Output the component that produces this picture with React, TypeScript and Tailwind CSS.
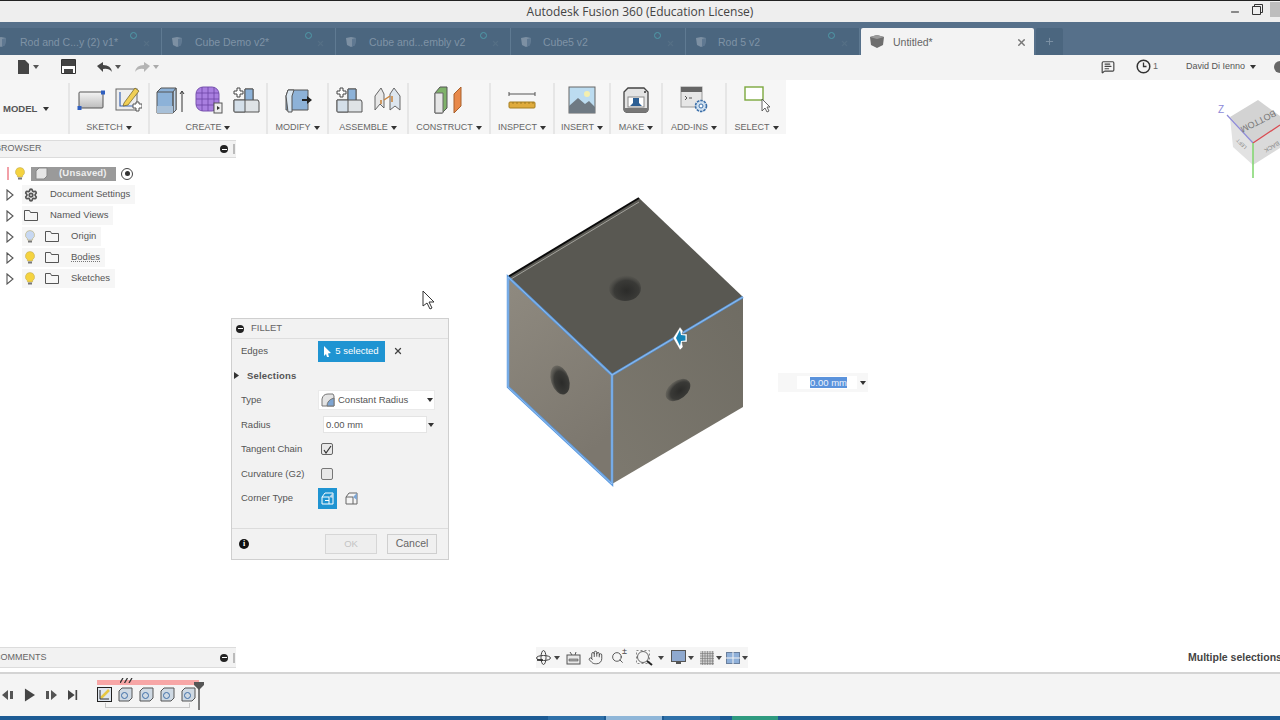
import React from 'react';
import { Hand, MessageSquareText, Search, Settings, X, Plus, Minus } from 'lucide-react';

const Caret = ({ className = '' }: { className?: string }) => (
  <svg width="6" height="4" viewBox="0 0 6 4" className={`shrink-0 ${className}`}>
    <path d="M0 0h6L3 4z" fill="currentColor" />
  </svg>
);

// document tabs along the top
const tabs = [
  { name: 'Rod and C...y (2) v1*', width: 'w-[162px]', text: 'pl-[20px]', dot: 'left-[130px]', clip: true },
  { name: 'Cube Demo v2*', width: 'w-[174px]', text: 'pl-[33px]', dot: 'left-[143px]', clip: false },
  { name: 'Cube and...embly v2', width: 'w-[175px]', text: 'pl-[33px]', dot: 'left-[144px]', clip: false },
  { name: 'Cube5 v2', width: 'w-[175px]', text: 'pl-[32px]', dot: 'left-[143px]', clip: false },
  { name: 'Rod 5 v2', width: 'w-[174px]', text: 'pl-[32px]', dot: 'left-[142px]', clip: false },
];

const TabCube = () => (
  <svg width="12" height="12" viewBox="0 0 12 12">
    <path d="M1 2l5-1 5 1-1 7-4 2-4-2z" fill="#7d90a3" />
    <path d="M7 3l4-1-1 7-3 2z" fill="#5f7891" />
  </svg>
);

const SketchRect = () => (
  <svg width="28" height="28" viewBox="0 0 28 28">
    <defs>
      <linearGradient id="sk" x1="0" y1="0" x2="0" y2="1">
        <stop offset="0" stopColor="#f4f4f4" />
        <stop offset="1" stopColor="#bcbcbc" />
      </linearGradient>
    </defs>
    <rect x="2" y="6" width="24" height="16" rx="1" fill="url(#sk)" stroke="#555" />
    <rect x="0.5" y="20" width="4" height="4" fill="#2f5fc0" />
    <rect x="24" y="4.5" width="4" height="4" fill="#2f5fc0" />
  </svg>
);

const SketchEdit = () => (
  <svg width="28" height="28" viewBox="0 0 28 28">
    <rect x="2" y="3" width="21" height="21" fill="#eee" stroke="#666" />
    <path d="M6 6v14h14" stroke="#3a66b5" strokeWidth="1.2" fill="none" />
    <path d="M10 17L21 2l4 3-11 14-5 1z" fill="#f0cf56" stroke="#6a5a20" strokeWidth="0.7" />
    <path d="M19 18h3v-2h3v2h3v4h-3v3h-3v-3h-3z" fill="#fff" stroke="#555" />
  </svg>
);

const Extrude = () => (
  <svg width="30" height="28" viewBox="0 0 30 28">
    <path d="M1 6l4-4h15v22l-3 3H1z" fill="#8db2d8" stroke="#555" />
    <path d="M17 6l3-4v22l-3 3z" fill="#bcd3ea" stroke="#555" />
    <path d="M1 6h16v21" fill="none" stroke="#555" />
    <path d="M1 20h16v7H1z" fill="#a8c0d8" />
    <path d="M26 26V6M24 8l2-3 2 3" stroke="#333" fill="none" />
  </svg>
);

const FormMesh = () => (
  <svg width="28" height="28" viewBox="0 0 28 28">
    <rect x="1" y="1" width="23" height="24" rx="7" fill="#a97fe0" stroke="#7a55b0" />
    <path d="M1 7h23M1 13h23M1 19h23M7 1v24M13 1v24M19 1v24" stroke="#6d45a5" strokeWidth="0.8" />
    <rect x="19" y="17" width="8" height="10" fill="#eee" stroke="#555" />
    <path d="M22 20l3 2-3 2z" fill="#333" />
  </svg>
);

const AssembleNew = () => (
  <svg width="28" height="28" viewBox="0 0 28 28">
    <path d="M2 14h11V3h8v11h5l1 2v10H3l-1-1z" fill="#dfe3e6" stroke="#555" />
    <path d="M13 3h8v11h-8z" fill="#8db2d8" stroke="#555" />
    <path d="M2 14h11v12H2z" fill="#d4dfe9" stroke="#555" />
    <path d="M5 2h3v3h3v3H8v3H5V8H2V5h3z" fill="#fff" stroke="#444" />
  </svg>
);

const Modify = () => (
  <svg width="28" height="28" viewBox="0 0 28 28">
    <path d="M4 4h20v20H2V10z" fill="#8db2d8" stroke="#555" />
    <path d="M2 10L4 4h6L8 10v16H4z" fill="#dbe7f1" stroke="#555" />
    <path d="M18 13h5v-3l5 4-5 4v-3h-5z" fill="#222" />
  </svg>
);

const Joint = () => (
  <svg width="28" height="28" viewBox="0 0 28 28">
    <path d="M2 24V10l6-8 3 6v14l-4-4z" fill="#e7e7e7" stroke="#666" />
    <path d="M17 8l4-6 6 8v14l-5-4-5 4z" fill="#dde6ee" stroke="#666" />
    <path d="M11 14l6-4M8 14v4M19 10v6" stroke="#c9823a" strokeWidth="1.5" />
  </svg>
);

const Construct = () => (
  <svg width="30" height="28" viewBox="0 0 30 28">
    <path d="M1 7l5-6h7v21l-5 5H1z" fill="#7fb26a" stroke="#555" />
    <path d="M1 7h8v20H1z" fill="#e6e6e6" stroke="#666" />
    <path d="M20 8l7-7v19l-7 7z" fill="#e8894a" stroke="#a8602c" />
  </svg>
);

const Inspect = () => (
  <svg width="28" height="28" viewBox="0 0 28 28">
    <path d="M1 8h26M1 6v4M27 6v4" stroke="#555" fill="none" />
    <rect x="1" y="16" width="26" height="6" rx="1" fill="#dfab3c" stroke="#a57f20" />
    <path d="M5 16v2M9 16v2M13 16v2M17 16v2M21 16v2M25 16v2" stroke="#8a6a18" strokeWidth="0.7" />
  </svg>
);

const Insert = () => (
  <svg width="28" height="28" viewBox="0 0 28 28">
    <rect x="1" y="1" width="26" height="26" fill="#bcdcf0" stroke="#666" />
    <circle cx="19" cy="8" r="3" fill="#f4efae" />
    <path d="M1 27v-7l9-8 7 6 4-3 6 6v6z" fill="#6f7a83" />
  </svg>
);

const Make = () => (
  <svg width="28" height="28" viewBox="0 0 28 28">
    <path d="M2 6l4-4h16l4 4v18l-2 2H4l-2-2z" fill="#e4e4e4" stroke="#444" strokeWidth="1.3" />
    <rect x="6" y="11" width="16" height="10" fill="#fff" stroke="#888" />
    <path d="M11 17v-5h6v5l3 3H8z" fill="#2d5f94" />
    <path d="M2 22h24v4H2z" fill="#777" />
    <circle cx="23" cy="6" r="1" fill="#333" />
  </svg>
);

const AddIns = () => (
  <svg width="28" height="28" viewBox="0 0 28 28">
    <rect x="1" y="1" width="21" height="20" fill="#e6e6e6" stroke="#999" />
    <rect x="1" y="1" width="21" height="5" fill="#666" />
    <path d="M5 10l2 2-2 2M9 12h3" stroke="#555" fill="none" />
    <circle cx="21" cy="20" r="5.5" fill="#cfe0f0" stroke="#3a6ea8" strokeWidth="1.6" strokeDasharray="2.5 1" />
    <circle cx="21" cy="20" r="2" fill="#fff" stroke="#3a6ea8" />
  </svg>
);

const SelectIcon = () => (
  <svg width="28" height="28" viewBox="0 0 28 28">
    <rect x="2" y="1" width="18" height="13" fill="#fff" stroke="#7ca83e" strokeWidth="1.4" />
    <path d="M19 13v12l3-3 2 4 2-1-2-4h3z" fill="#fff" stroke="#555" strokeWidth="0.9" />
  </svg>
);

// ribbon groups, widths follow the divider positions
const ribbon = [
  { label: 'SKETCH', width: 'w-[80px]', gap: 'gap-[9px]', icons: [<SketchRect key="a" />, <SketchEdit key="b" />] },
  { label: 'CREATE', width: 'w-[118px]', gap: 'gap-[9px]', icons: [<Extrude key="a" />, <FormMesh key="b" />, <AssembleNew key="c" />] },
  { label: 'MODIFY', width: 'w-[61px]', gap: 'gap-0', icons: [<Modify key="a" />] },
  { label: 'ASSEMBLE', width: 'w-[80px]', gap: 'gap-[10px]', icons: [<AssembleNew key="a" />, <Joint key="b" />] },
  { label: 'CONSTRUCT', width: 'w-[82px]', gap: 'gap-0', icons: [<Construct key="a" />] },
  { label: 'INSPECT', width: 'w-[64px]', gap: 'gap-0', icons: [<Inspect key="a" />] },
  { label: 'INSERT', width: 'w-[56px]', gap: 'gap-0', icons: [<Insert key="a" />] },
  { label: 'MAKE', width: 'w-[52px]', gap: 'gap-0', icons: [<Make key="a" />] },
  { label: 'ADD-INS', width: 'w-[64px]', gap: 'gap-0', icons: [<AddIns key="a" />] },
  { label: 'SELECT', width: 'w-[61px]', gap: 'gap-0', icons: [<SelectIcon key="a" />] },
];

const Bulb = ({ color = '#f5d33f' }: { color?: string }) => (
  <svg width="10" height="13" viewBox="0 0 10 13">
    <path d="M5 .5a4.5 4.5 0 0 0-2.6 8.2V10h5.2V8.700A4.500 4.500 0 0 0 5 .5z" fill={color} stroke="#b9a65a" strokeWidth="0.5" />
    <rect x="3" y="10.500" width="4" height="2" fill="#777" />
  </svg>
);

const Folder = () => (
  <svg width="14" height="11" viewBox="0 0 14 11">
    <path d="M.5 10.500V.5h5l1 2h7v8z" fill="#f6f6f6" stroke="#555" />
  </svg>
);

const Expand = () => (
  <svg width="8" height="12" viewBox="0 0 8 12" className="shrink-0">
    <path d="M1 1l6 5-6 5z" fill="#fff" stroke="#555" strokeWidth="1.100" />
  </svg>
);

const PanelPin = () => (
  <div className="flex items-center gap-[5px]">
    <span className="w-[8px] h-[8px] rounded-full bg-[#222] flex items-center justify-center">
      <span className="w-[5px] h-px bg-white" />
    </span>
    <span className="w-[2px] h-[10px] border-x border-[#bbb]" />
  </div>
);

const Row = ({ label, children }: { label: string; children?: React.ReactNode }) => (
  <div className="flex items-center h-[24.500px] pl-[9px]">
    <span className="w-[77px] text-[9.500px] text-[#555]">{label}</span>
    {children}
  </div>
);

const TreeRow = ({ children, label, pad }: { children: React.ReactNode; label: string; pad: string }) => (
  <div className="flex items-center h-[21px] pl-[6px]">
    <Expand />
    <div className="flex items-center h-[19px] ml-[8px] pr-[5px] bg-[#f6f6f6]">
      {children}
      <span className={`text-[9.500px] text-[#555] ${pad}`}>{label}</span>
    </div>
  </div>
);

const Model3D = () => (
  <svg width="260" height="300" viewBox="495 190 260 300" className="absolute left-[495px] top-[110px]">
    <defs>
      <linearGradient id="lf" x1="0" y1="0" x2="0.4" y2="1">
        <stop offset="0" stopColor="#8f8a80" />
        <stop offset="1" stopColor="#7c776e" />
      </linearGradient>
      <linearGradient id="rf" x1="0" y1="1" x2="1" y2="0">
        <stop offset="0" stopColor="#7d796f" />
        <stop offset="1" stopColor="#6f6c63" />
      </linearGradient>
      <radialGradient id="hole" cx="0.55" cy="0.6" r="0.6">
        <stop offset="0" stopColor="#2b2b29" />
        <stop offset="0.65" stopColor="#3a3a37" />
        <stop offset="1" stopColor="#5a5953" stopOpacity="0.6" />
      </radialGradient>
    </defs>
    <path d="M639 198L508 277l104 98 131-78z" fill="#595852" />
    <path d="M508 277l104 98v109L508 387z" fill="url(#lf)" />
    <path d="M612 375l131-78v110l-131 77z" fill="url(#rf)" />
    <ellipse cx="625" cy="288" rx="16" ry="13" fill="url(#hole)" />
    <ellipse cx="560" cy="380" rx="9" ry="15" transform="rotate(-18 560 380)" fill="url(#hole)" />
    <ellipse cx="678" cy="390" rx="14" ry="9" transform="rotate(-38 678 390)" fill="url(#hole)" />
    <path d="M508 277L639 198" stroke="#0b0b0b" strokeWidth="2" />
    <path d="M511 279L639 202" stroke="#a3a29c" strokeWidth="1" />
    <path d="M743 297L612 375 508 277v110l104 97V375" fill="none" stroke="#5b9be2" strokeWidth="2.500" />
    <path d="M743 297L612 375 508 277v110l104 97V375" fill="none" stroke="#c8dcf2" strokeWidth="0.5" />
    <path d="M673 338l7-11 3 4-1 3h5v8h-5l1 5-3 3z" fill="#fff" stroke="#555" strokeWidth="0.4" />
    <path d="M676 338l4-8 1 5 4.500.5v5l-4.500.5-1 5z" fill="#1584b8" />
  </svg>
);

const ViewCube = () => (
  <svg width="64" height="84" viewBox="1216 98 64 84" className="absolute left-[1216px] top-[18px]">
    <path d="M1230 117l28-17 22 16v9l-27 18z" fill="#d3d3d3" />
    <path d="M1230 117l23 26v22l-20-18z" fill="#e2e2e2" />
    <path d="M1253 143l27-18v23l-27 17z" fill="#dadada" />
    <path d="M1227 115l26 28" stroke="#8e8bd8" strokeWidth="1.200" />
    <path d="M1253 143l27-18" stroke="#d94a50" strokeWidth="1.200" />
    <path d="M1253 143v35" stroke="#7ed66b" strokeWidth="1.500" />
    <text x="1218" y="113" fontSize="10" fill="#8e8bd8" fontFamily="Liberation Sans">Z</text>
    <text x="1274" y="110" fontSize="9" fill="#777" fontFamily="Liberation Sans" transform="rotate(153 1274 110)">BOTTOM</text>
    <text x="1278" y="141" fontSize="6" fill="#888" fontFamily="Liberation Sans" transform="rotate(150 1278 141)">BACK</text>
    <text x="1247" y="147" fontSize="5" fill="#888" fontFamily="Liberation Sans" transform="rotate(225 1247 147)">LEFT</text>
  </svg>
);

const FilletDialog = () => (
  <div className="absolute left-[231px] top-[238px] w-[218px] h-[242px] bg-[#f2f2f2] border border-[#cfcfcf] flex flex-col">
    <div className="flex items-center gap-[7px] h-[20px] shrink-0 pl-[4px] border-b border-[#dedede]">
      <span className="w-[8px] h-[8px] rounded-full bg-[#222] flex items-center justify-center">
        <span className="w-[5px] h-px bg-white" />
      </span>
      <span className="text-[9.500px] text-[#666]">FILLET</span>
    </div>
    <Row label="Edges">
      <div className="flex items-center justify-center gap-[4px] w-[67px] h-[21px] bg-[#1f94d2] text-white text-[9.500px]">
        <svg width="7" height="11" viewBox="0 0 7 11"><path d="M0 0l7 7-3 .4L5 11l-2 0-1-3-2 2z" fill="#fff" /></svg>
        5 selected
      </div>
      <X size={10} strokeWidth={3} className="ml-[8px] text-[#444]" />
    </Row>
    <div className="flex items-center h-[24.500px] pl-[2px] gap-[8px]">
      <svg width="5" height="7" viewBox="0 0 5 7"><path d="M0 0l5 3.500L0 7z" fill="#333" /></svg>
      <span className="text-[9.500px] font-bold text-[#555] tracking-[0.2px]">Selections</span>
    </div>
    <Row label="Type">
      <div className="flex items-center w-[117px] h-[20px] bg-white border border-[#eaeaea] pl-[2px] pr-[1px]">
        <svg width="14" height="14" viewBox="0 0 14 14" className="shrink-0">
          <path d="M1 13V6q1-5 6-5h5l1 2v10z" fill="#e4e4e4" stroke="#777" />
          <path d="M6 13q0-6 7-8v8z" fill="#7ea5d2" stroke="#777" />
        </svg>
        <span className="ml-[3px] text-[9.500px] text-[#555]">Constant Radius</span>
        <Caret className="ml-auto text-[#333]" />
      </div>
    </Row>
    <Row label="Radius">
      <div className="flex items-center w-[104px] h-[17px] ml-[5px] bg-white border border-[#e4e4e4] pl-[2px] text-[9.500px] text-[#555]">0.00 mm</div>
      <Caret className="ml-[1px] text-[#333]" />
    </Row>
    <Row label="Tangent Chain">
      <div className="flex items-center justify-center w-[12px] h-[12px] ml-[3px] rounded-[2px] bg-[#e8e8e8] border border-[#666]">
        <svg width="9" height="9" viewBox="0 0 9 9"><path d="M1 5l2 3 5-7" stroke="#333" strokeWidth="1.200" fill="none" /></svg>
      </div>
    </Row>
    <Row label="Curvature (G2)">
      <div className="w-[12px] h-[12px] ml-[3px] rounded-[2px] bg-[#e8e8e8] border border-[#777]" />
    </Row>
    <Row label="Corner Type">
      <div className="flex items-center justify-center w-[19px] h-[21px] bg-[#1f94d2]">
        <svg width="13" height="13" viewBox="0 0 13 13">
          <path d="M1 12V5l3-4h8v11zM1 5h7v7M4 8.500h4" fill="none" stroke="#fff" />
          <path d="M8 5l4-4v5z" fill="#bcd9ec" />
        </svg>
      </div>
      <div className="flex items-center justify-center w-[19px] h-[21px] ml-[5px]">
        <svg width="13" height="13" viewBox="0 0 13 13">
          <path d="M1 12V5l3-4h8v11zM1 5h7v7" fill="#f4f4f4" stroke="#666" />
          <path d="M8 5l4-4v7z" fill="#7ea5d2" />
        </svg>
      </div>
    </Row>
    <div className="mt-auto flex items-center h-[31px] border-t border-[#dcdcdc] pl-[7px]">
      <span className="flex items-center justify-center w-[10px] h-[10px] rounded-full bg-[#111] text-white text-[8px] font-bold font-['Liberation_Serif',serif]">i</span>
      <div className="ml-[76px] flex items-center justify-center w-[52px] h-[20px] bg-[#eeeeee] border border-[#d6d6d6] text-[9.500px] text-[#c4c4c4]">OK</div>
      <div className="ml-[10px] flex items-center justify-center w-[50px] h-[20px] bg-[#f0f0f0] border border-[#cfcfcf] text-[10.500px] text-[#666]">Cancel</div>
    </div>
  </div>
);

const NavBar = () => (
  <div className="flex items-center w-[212px] h-[21px] bg-[#f5f5f5] text-[#444]">
    <svg width="15" height="15" viewBox="0 0 15 15">
      <ellipse cx="7.500" cy="8" rx="7" ry="2.500" fill="none" stroke="#444" />
      <ellipse cx="7.500" cy="7.500" rx="2.500" ry="7" fill="none" stroke="#444" />
      <path d="M1 10h6" stroke="#222" strokeWidth="1.500" />
    </svg>
    <Caret className="ml-[3px]" />
    <svg width="15" height="14" viewBox="0 0 15 14" className="ml-[6px]">
      <rect x="1" y="4" width="13" height="9" fill="#e8e8e8" stroke="#555" />
      <path d="M3 8h9v2H3z" fill="#aaa" stroke="#555" strokeWidth="0.6" />
      <path d="M4 1l2 3M10 1l-1 3" stroke="#555" />
    </svg>
    <Hand size={15} strokeWidth={1.400} className="ml-[7px]" />
    <span className="relative ml-[8px] w-[15px] h-[15px]">
      <Search size={13} strokeWidth={1.600} className="mt-[1px]" />
      <span className="absolute right-[-1px] top-[-3px] text-[9px] leading-none">±</span>
    </span>
    <svg width="17" height="16" viewBox="0 0 17 16" className="ml-[10px]">
      <circle cx="7" cy="7" r="5.500" fill="#f4f4f4" stroke="#666" />
      <rect x="0.500" y="0.500" width="13" height="13" fill="none" stroke="#888" strokeDasharray="2 2" />
      <path d="M11 11l5 4" stroke="#222" strokeWidth="2" />
    </svg>
    <Caret className="ml-[5px]" />
    <svg width="15" height="15" viewBox="0 0 15 15" className="ml-[7px]">
      <rect x="0.500" y="0.500" width="14" height="11" fill="#8fa9cf" stroke="#555" />
      <path d="M5 12h5v2H5z" fill="#555" />
    </svg>
    <Caret className="ml-[2px]" />
    <svg width="14" height="14" viewBox="0 0 14 14" className="ml-[6px]">
      <rect width="14" height="14" fill="#cfcfcf" />
      <path d="M2.500 0v14M5 0v14M7.500 0v14M10 0v14M12.500 0v14M0 2.500h14M0 5h14M0 7.500h14M0 10h14M0 12.500h14" stroke="#777" strokeWidth="0.6" />
    </svg>
    <Caret className="ml-[2px]" />
    <svg width="14" height="12" viewBox="0 0 14 12" className="ml-[4px]">
      <rect x="0.500" y="0.500" width="13" height="11" fill="#8fb0d9" stroke="#6a7f9c" />
      <path d="M7 0v12M0 6h14" stroke="#f4f4f4" />
    </svg>
    <Caret className="ml-[2px]" />
  </div>
);

const App = () => {
  return (
    <div className="w-[1280px] h-[720px] overflow-hidden flex flex-col bg-white font-['Liberation_Sans',Arial,sans-serif]">
      {/* title bar */}
      <div className="relative flex items-center justify-center h-[22px] shrink-0 bg-[#eeeeee] border-t border-[#222]">
        <span className="text-[12px] text-[#444] font-['Open_Sans',sans-serif]">Autodesk Fusion 360 (Education License)</span>
        <div className="absolute right-0 top-0 flex items-start">
          <Minus size={12} strokeWidth={2} className="mt-[5px] text-[#222]" />
          <svg width="11" height="11" viewBox="0 0 11 11" className="ml-[11px] mt-[3px]">
            <path d="M.5 2.500h8v8h-8zM2.500 2.500v-2h8v8h-2" fill="none" stroke="#333" />
          </svg>
          <div className="ml-[7px] w-[10px] h-[15px] mt-[1px] bg-[#bdbdbd]" />
        </div>
      </div>

      {/* tabs */}
      <div className="flex items-end h-[33px] shrink-0 bg-[#56708a]">
        {tabs.map((tab) => (
          <div
            key={tab.name}
            className={`relative flex items-center h-[27px] pt-[3px] ${tab.width} ${tab.text} bg-[#4b667f] border-r border-[#5f7a92] text-[10.500px] text-[#7f93a6]`}
          >
            <span className={tab.clip ? 'absolute left-[-5px] top-[8px]' : 'absolute left-[9px] top-[8px]'}><TabCube /></span>
            {tab.name}
            <span className={`absolute top-[4px] ${tab.dot} w-[7px] h-[7px] rounded-full border border-[#4f9aa8]`} />
            <X size={9} strokeWidth={3} className="absolute right-[10px] top-[11px] text-[#566f86]" />
          </div>
        ))}
        <div className="relative flex items-center w-[173px] h-[27px] pt-[3px] ml-[1px] pl-[32px] bg-[#f3f3f3] rounded-t-[2px] text-[10.500px] text-[#666]">
          <svg width="14" height="13" viewBox="0 0 14 13" className="absolute left-[9px] top-[7px]">
            <path d="M0 2l7-2 7 2-1 8-6 3-6-3z" fill="#6e6e6e" />
            <path d="M0 2l7 2 7-2-7-2z" fill="#9a9a9a" />
          </svg>
          Untitled*
          <X size={11} strokeWidth={3} className="absolute right-[7px] top-[9px] text-[#777]" />
        </div>
        <div className="flex items-center justify-center w-[27px] h-[27px] ml-[2px] bg-[#4b667f] rounded-t-[2px]">
          <Plus size={11} strokeWidth={2} className="text-[#7f93a6]" />
        </div>
      </div>

      {/* quick access */}
      <div className="flex items-center h-[25px] shrink-0 pb-[2px] bg-[#f3f3f3] text-[#444]">
        <svg width="11" height="14" viewBox="0 0 11 14" className="ml-[18px]"><path d="M0 0h7l4 4v10H0z" fill="#444" /></svg>
        <Caret className="ml-[4px] text-[#555]" />
        <svg width="15" height="15" viewBox="0 0 15 15" className="ml-[22px]">
          <path d="M.5.5h14v14H.5z" fill="#fff" stroke="#333" />
          <path d="M1 1h13v6H1zM3 10h9v4H3z" fill="#444" />
        </svg>
        <svg width="15" height="10" viewBox="0 0 15 10" className="ml-[21px]"><path d="M0 4l6-4v3q8 0 9 7-3-4-9-3v3z" fill="#444" /></svg>
        <Caret className="ml-[3px] text-[#555]" />
        <svg width="15" height="10" viewBox="0 0 15 10" className="ml-[14px]"><path d="M15 4L9 0v3Q1 3 0 10q3-4 9-3v3z" fill="#b4b4b4" /></svg>
        <Caret className="ml-[3px] text-[#aaa]" />
        <MessageSquareText size={14} strokeWidth={2} className="ml-auto text-[#444]" />
        <svg width="15" height="15" viewBox="0 0 15 15" className="ml-[21px]">
          <circle cx="7.500" cy="7.500" r="6.300" fill="none" stroke="#333" strokeWidth="1.500" />
          <path d="M7.500 3.500v4h3" fill="none" stroke="#333" strokeWidth="1.300" />
        </svg>
        <span className="ml-[2px] text-[9px] text-[#666]">1</span>
        <span className="ml-[28px] text-[9px] text-[#555]">David Di Ienno</span>
        <Caret className="ml-[5px] text-[#333]" />
        <span className="ml-[18px] mr-[-6px] w-[12px] h-[12px] rounded-full bg-[#666]" />
      </div>

      {/* canvas */}
      <div className="relative flex-1 flex flex-col min-h-0 bg-white">
        <div className="flex w-[786px] h-[54px] shrink-0 bg-[#f6f6f6]">
          <div className="flex items-center gap-[6px] w-[68px] h-[58px] shrink-0 pl-[3px] text-[9.500px] text-[#555] font-bold">
            MODEL
            <Caret className="text-[#333]" />
          </div>
          {ribbon.map((group) => (
            <div key={group.label} className={`flex flex-col items-center ${group.width} h-[51px] mt-[3px] shrink-0 border-l-2 border-[#e6e6e6]`}>
              <div className={`flex items-center justify-center ${group.gap} w-full h-[34px] shrink-0`}>
                {group.icons}
              </div>
              <div className="flex items-center gap-[3px] text-[9px] text-[#666] leading-none mt-[6px]">
                {group.label}
                <Caret className="text-[#333]" />
              </div>
            </div>
          ))}
        </div>

        {/* browser panel */}
        <div className="flex-1 min-h-0 pt-[6px]">
          <div className="w-[236px]">
            <div className="flex items-center justify-between h-[18px] pr-[1px] bg-[#f2f2f2] border-y border-[#dcdcdc]">
              <span className="ml-[-5px] text-[9px] text-[#666]">BROWSER</span>
              <PanelPin />
            </div>
            <div className="pt-[5px]">
              <div className="flex items-center h-[21px] pl-[7px]">
                <span className="w-[2px] h-[13px] bg-[#f2a0a8]" />
                <span className="ml-[6px]"><Bulb /></span>
                <div className="flex items-center ml-[6px] w-[85px] h-[14px] bg-[#9a9a9a]">
                  <svg width="13" height="13" viewBox="0 0 13 13" className="ml-[4px]">
                    <path d="M1 12V4l3-3h8v8l-3 3z" fill="#e6e6e6" stroke="#888" />
                  </svg>
                  <span className="ml-[11px] text-[9.500px] font-bold text-[#eeeeee] tracking-[0.2px]">(Unsaved)</span>
                </div>
                <span className="flex items-center justify-center ml-[5px] w-[12px] h-[12px] rounded-full border border-[#444]">
                  <span className="w-[5px] h-[5px] rounded-full bg-[#333]" />
                </span>
              </div>
              <TreeRow label="Document Settings" pad="ml-[12px]">
                <Settings size={14} strokeWidth={3} className="text-[#555] ml-[2px]" />
              </TreeRow>
              <TreeRow label="Named Views" pad="ml-[12px]">
                <span className="ml-[2px] flex"><Folder /></span>
              </TreeRow>
              <TreeRow label="Origin" pad="ml-[12px]">
                <span className="ml-[3px] flex"><Bulb color="#c7d8f2" /></span>
                <span className="ml-[10px] flex"><Folder /></span>
              </TreeRow>
              <TreeRow label="Bodies" pad="ml-[12px] underline decoration-dotted decoration-[#777]">
                <span className="ml-[3px] flex"><Bulb /></span>
                <span className="ml-[10px] flex"><Folder /></span>
              </TreeRow>
              <TreeRow label="Sketches" pad="ml-[12px]">
                <span className="ml-[3px] flex"><Bulb /></span>
                <span className="ml-[10px] flex"><Folder /></span>
              </TreeRow>
            </div>
          </div>
        </div>

        {/* comments, navigation bar, status */}
        <div className="flex items-center h-[21px] mb-[4px] shrink-0">
          <div className="flex items-center justify-between w-[236px] h-[21px] pr-[1px] bg-[#f2f2f2] border-y border-[#dcdcdc]">
            <span className="ml-[-6px] text-[9px] text-[#666]">COMMENTS</span>
            <PanelPin />
          </div>
          <div className="ml-[300px]"><NavBar /></div>
          <span className="ml-auto mr-[-12px] w-[104px] text-[10.500px] font-bold text-[#444] whitespace-nowrap">Multiple selections</span>
        </div>

        <ViewCube />
        <Model3D />
        <FilletDialog />

        {/* radius input next to the model */}
        <div className="absolute left-[778px] top-[293px] flex items-center w-[90px] h-[19px] bg-[#f7f7f7]">
          <div className="ml-[19px] w-[60px] h-[13px] bg-white pl-[13px] text-[9.500px] leading-[13px] text-[#eef4fc]">
            <span className="bg-[#5b93dc]">0.00 mm</span>
          </div>
          <Caret className="ml-[3px] text-[#333]" />
        </div>

        {/* mouse pointer */}
        <svg width="14" height="20" viewBox="0 0 14 20" className="absolute left-[422px] top-[210px]">
          <path d="M1 1v15l4-3 3 6 2-1-3-6h5z" fill="#fff" stroke="#333" />
        </svg>
      </div>

      {/* timeline */}
      <div className="flex items-center h-[44px] shrink-0 pl-[2px] bg-[#f4f4f4] border-t-2 border-[#d4d4d4] text-[#444]">
        <svg width="12" height="12" viewBox="0 0 12 12"><path d="M0 6l6-5v10zM8 2h3v8H8z" fill="#555" /></svg>
        <svg width="11" height="14" viewBox="0 0 12 14" className="ml-[10px]"><path d="M1 0l11 7-11 7z" fill="#444" /></svg>
        <svg width="12" height="12" viewBox="0 0 12 12" className="ml-[10px]"><path d="M12 6L6 1v10zM1 2h3v8H1z" fill="#555" /></svg>
        <svg width="10" height="12" viewBox="0 0 12 12" className="ml-[11px]"><path d="M0 0l8 6-8 6zM9 0h2v12H9z" fill="#444" /></svg>
        <div className="relative ml-[16px] w-[112px] h-[40px]">
          <div className="absolute left-[3px] top-[5px] w-[102px] h-[5px] bg-[#f7a6a6]" />
          <svg width="13" height="5" viewBox="0 0 13 5" className="absolute left-[26px] top-[3px]">
            <path d="M0 5l3-5M4.500 5l3-5M9 5l3-5" stroke="#333" strokeWidth="1.300" />
          </svg>
          <div className="absolute left-[3px] top-[12px] flex gap-[6px]">
            <svg width="15" height="15" viewBox="0 0 15 15">
              <rect x="0.500" y="0.500" width="14" height="14" fill="#dfe6ef" stroke="#222" />
              <path d="M4 11l8-8" stroke="#e7c742" strokeWidth="2.500" />
              <path d="M3 3v9h9" stroke="#333" fill="none" />
            </svg>
            {[0, 1, 2, 3].map((n) => (
              <svg key={n} width="15" height="15" viewBox="0 0 15 15">
                <path d="M1 14V4l3-3h10v10l-3 3z" fill="#cfd9e3" stroke="#555" />
                <circle cx="6.500" cy="8.500" r="3" fill="none" stroke="#3f6fa8" />
              </svg>
            ))}
          </div>
          <div className="absolute left-[11px] top-[28px] w-[85px] h-[5px] border-x border-b border-[#c8c8c8]" />
          <svg width="10" height="28" viewBox="0 0 10 28" className="absolute left-[100px] top-[7px]">
            <path d="M0 0h10v3L5 8 0 3z" fill="#555" />
            <path d="M5 6v22" stroke="#555" strokeWidth="1.500" />
          </svg>
        </div>
      </div>

      {/* taskbar strip */}
      <div className="flex h-[4px] shrink-0 bg-[#1d5b94]">
        <div className="ml-[548px] w-[56px] bg-[#2f70a8]" />
        <div className="ml-[2px] w-[56px] bg-[#8fb6d8]" />
        <div className="ml-[2px] w-[56px] bg-[#2f70a8]" />
        <div className="ml-[12px] w-[46px] bg-[#2f9a7f]" />
      </div>
    </div>
  );
};

export default App;
